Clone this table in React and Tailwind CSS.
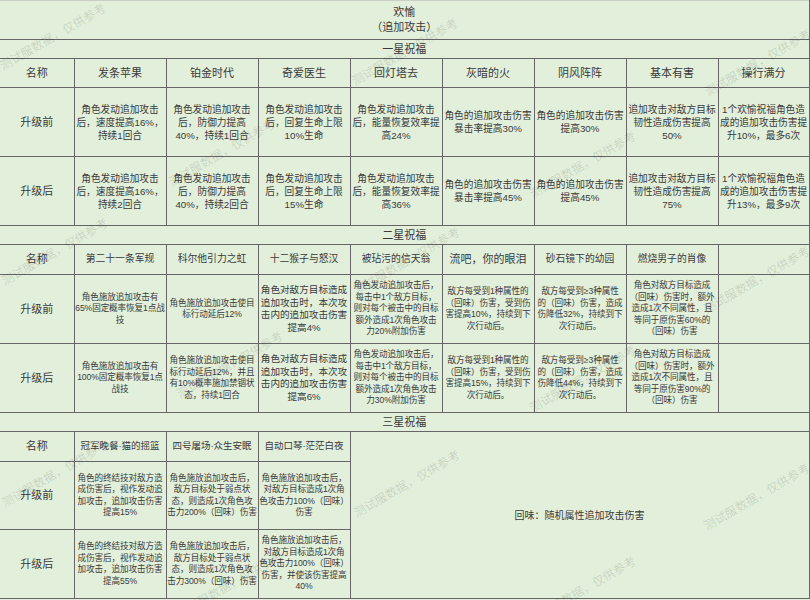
const FONT = "font-['Liberation_Sans','Noto_Sans_CJK_SC',sans-serif]";

const b = "border border-[#666] p-0 text-center align-middle";
const t10 = "text-[9.7px] leading-[13px]";
const t9 = "text-[8.6px] leading-[11.5px] tracking-[-0.1px]";
const t10b = "text-[9.6px] leading-[12.5px]";

const star1 = {
  heads: ["发条苹果", "铂金时代", "奇爱医生", "回灯塔去", "灰暗的火", "阴风阵阵", "基本有害", "操行满分"],
  before: [
    ["角色发动追加攻击", "后，速度提高16%，", "持续1回合"],
    ["角色发动追加攻击", "后，防御力提高", "40%，持续1回合"],
    ["角色发动追加攻击", "后，回复生命上限", "10%生命"],
    ["角色发动追加攻击", "后，能量恢复效率提", "高24%"],
    ["角色的追加攻击伤害", "暴击率提高30%"],
    ["角色的追加攻击伤害", "提高30%"],
    ["追加攻击对敌方目标", "韧性造成伤害提高", "50%"],
    ["1个欢愉祝福角色造", "成的追加攻击伤害提", "升10%，最多6次"],
  ],
  after: [
    ["角色发动追加攻击", "后，速度提高16%，", "持续2回合"],
    ["角色发动追加攻击", "后，防御力提高", "40%，持续2回合"],
    ["角色发动追加攻击", "后，回复生命上限", "15%生命"],
    ["角色发动追加攻击", "后，能量恢复效率提", "高36%"],
    ["角色的追加攻击伤害", "暴击率提高45%"],
    ["角色的追加攻击伤害", "提高45%"],
    ["追加攻击对敌方目标", "韧性造成伤害提高", "75%"],
    ["1个欢愉祝福角色造", "成的追加攻击伤害提", "升13%，最多9次"],
  ],
};

const star2 = {
  heads: [
    ["第二十一条军规", "text-[9.8px]"],
    ["科尔他引力之虹", "text-[9.8px]"],
    ["十二猴子与怒汉", "text-[9.8px]"],
    ["被玷污的信天翁", "text-[9.8px]"],
    ["流吧，你的眼泪", "text-[11px]"],
    ["砂石镜下的幼园", "text-[9.8px]"],
    ["燃烧男子的肖像", "text-[9.8px]"],
    ["", "text-[10px]"],
  ],
  before: [
    [["角色施放追加攻击有", "65%固定概率恢复1点战", "技"], t9],
    [["角色施放追加攻击使目", "标行动延后12%"], t9],
    [["角色对敌方目标造成", "追加攻击时，本次攻", "击内的追加攻击伤害", "提高4%"], t10b],
    [["角色发动追加攻击后，", "每击中1个敌方目标，", "则对每个被击中的目标", "额外造成1次角色攻击", "力20%附加伤害"], t9],
    [["敌方每受到1种属性的", "（回味）伤害，受到伤", "害提高10%，持续到下", "次行动后。"], t9],
    [["敌方每受到≥3种属性", "的（回味）伤害，造成", "伤降低32%，持续到下", "次行动后。"], t9],
    [["角色对敌方目标造成", "（回味）伤害时，额外", "造成1次不同属性，且", "等同于原伤害60%的", "（回味）伤害"], t9],
    [[], t9],
  ],
  after: [
    [["角色施放追加攻击有", "100%固定概率恢复1点", "战技"], t9],
    [["角色施放追加攻击使目", "标行动延后12%，并且", "有10%概率施加禁锢状", "态，持续1回合"], t9],
    [["角色对敌方目标造成", "追加攻击时，本次攻", "击内的追加攻击伤害", "提高6%"], t10b],
    [["角色发动追加攻击后，", "每击中1个敌方目标，", "则对每个被击中的目标", "额外造成1次角色攻击", "力30%附加伤害"], t9],
    [["敌方每受到1种属性的", "（回味）伤害，受到伤", "害提高15%，持续到下", "次行动后。"], t9],
    [["敌方每受到≥3种属性", "的（回味）伤害，造成", "伤降低44%，持续到下", "次行动后。"], t9],
    [["角色对敌方目标造成", "（回味）伤害时，额外", "造成1次不同属性，且", "等同于原伤害90%的", "（回味）伤害"], t9],
    [[], t9],
  ],
};

const star3 = {
  heads: ["冠军晚餐·猫的摇篮", "四号屠场·众生安眠", "自动口琴·茫茫白夜"],
  before: [
    ["角色的终结技对敌方造", "成伤害后，视作发动追", "加攻击，追加攻击伤害", "提高15%"],
    ["角色施放追加攻击后，", "敌方目标处于弱点状", "态，则造成1次角色攻", "击力200%（回味）伤害"],
    ["角色施放追加攻击后，", "对敌方目标造成1次角", "色攻击力100%（回味）", "伤害"],
  ],
  after: [
    ["角色的终结技对敌方造", "成伤害后，视作发动追", "加攻击，追加攻击伤害", "提高55%"],
    ["角色施放追加攻击后，", "敌方目标处于弱点状", "态，则造成1次角色攻", "击力300%（回味）伤害"],
    ["角色施放追加攻击后，", "对敌方目标造成1次角", "色攻击力100%（回味）", "伤害，并使该伤害提高", "40%"],
  ],
};

const marks = [
  [53, 37], [405, 52], [758, 63],
  [222, 153], [583, 165],
  [55, 252], [407, 261], [757, 280],
  [230, 365], [583, 379],
  [55, 474], [407, 484], [757, 497],
  [230, 585], [583, 590],
];

function Lines({ lines }) {
  return lines.map((l, i) => (
    <span key={i} className="block whitespace-nowrap">
      {l}
    </span>
  ));
}

function Section({ title }) {
  return (
    <tr>
      <td colSpan={9} className={`${b} border-l-0 h-[19px] text-[11px] leading-[13px]`}>
        {title}
      </td>
    </tr>
  );
}

export default function App() {
  return (
    <div className={`relative w-[810px] h-[600px] overflow-hidden bg-[#e2efda] text-[#3a3a3a] ${FONT}`}>
      <table className="table-fixed border-collapse w-[809px]">
        <colgroup>
          <col className="w-[74px]" />
          <col className="w-[92px]" />
          <col className="w-[92px]" />
          <col className="w-[92px]" />
          <col className="w-[92px]" />
          <col className="w-[92px]" />
          <col className="w-[92px]" />
          <col className="w-[92px]" />
          <col className="w-[91px]" />
        </colgroup>
        <tbody>
          <tr>
            <td colSpan={9} className={`${b} border-l-0 border-t-[#c9cfc4] h-[39px] text-[11px] leading-[15px]`}>
              <span className="block">欢愉</span>
              <span className="block">（追加攻击）</span>
            </td>
          </tr>

          <Section title="一星祝福" />
          <tr>
            <td className={`${b} border-l-0 h-[29px] text-[11px]`}>名称</td>
            {star1.heads.map((h) => (
              <td key={h} className={`${b} text-[11px]`}>{h}</td>
            ))}
          </tr>
          <tr>
            <td className={`${b} border-l-0 h-[69px] text-[11px]`}>升级前</td>
            {star1.before.map((c, i) => (
              <td key={i} className={`${b} ${t10}`}><Lines lines={c} /></td>
            ))}
          </tr>
          <tr>
            <td className={`${b} border-l-0 h-[69px] text-[11px]`}>升级后</td>
            {star1.after.map((c, i) => (
              <td key={i} className={`${b} ${t10}`}><Lines lines={c} /></td>
            ))}
          </tr>

          <Section title="二星祝福" />
          <tr>
            <td className={`${b} border-l-0 h-[30px] text-[11px]`}>名称</td>
            {star2.heads.map(([h, s], i) => (
              <td key={i} className={`${b} ${s}`}>{h}</td>
            ))}
          </tr>
          <tr>
            <td className={`${b} border-l-0 h-[69px] text-[11px]`}>升级前</td>
            {star2.before.map(([c, s], i) => (
              <td key={i} className={`${b} ${s}`}><Lines lines={c} /></td>
            ))}
          </tr>
          <tr>
            <td className={`${b} border-l-0 h-[69px] text-[11px]`}>升级后</td>
            {star2.after.map(([c, s], i) => (
              <td key={i} className={`${b} ${s}`}><Lines lines={c} /></td>
            ))}
          </tr>

          <Section title="三星祝福" />
          <tr>
            <td className={`${b} border-l-0 h-[30px] text-[11px]`}>名称</td>
            {star3.heads.map((h) => (
              <td key={h} className={`${b} text-[9.5px]`}>{h}</td>
            ))}
            <td colSpan={5} rowSpan={3} className={`${b} text-[10px]`}>
              回味：随机属性追加攻击伤害
            </td>
          </tr>
          <tr>
            <td className={`${b} border-l-0 h-[68px] text-[11px]`}>升级前</td>
            {star3.before.map((c, i) => (
              <td key={i} className={`${b} ${t9}`}><Lines lines={c} /></td>
            ))}
          </tr>
          <tr>
            <td className={`${b} border-l-0 h-[69px] text-[11px]`}>升级后</td>
            {star3.after.map((c, i) => (
              <td key={i} className={`${b} ${t9}`}><Lines lines={c} /></td>
            ))}
          </tr>
        </tbody>
      </table>

      {marks.map(([x, y], i) => (
        <span
          key={i}
          className="pointer-events-none absolute whitespace-nowrap text-[12px] leading-none text-black/[0.13] -translate-x-1/2 -translate-y-1/2 -rotate-30"
          style={{ left: x, top: y }}
        >
          测试服数据，仅供参考
        </span>
      ))}
    </div>
  );
}
